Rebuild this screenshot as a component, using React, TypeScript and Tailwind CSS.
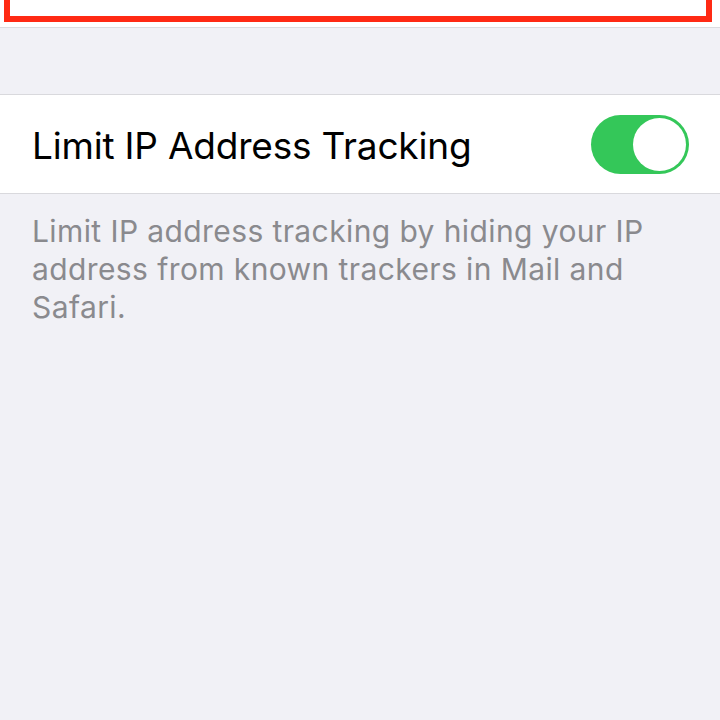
import React from 'react';

const Toggle: React.FC<{ on: boolean }> = ({ on }) => (
    <div className={`w-[98px] h-[59px] rounded-full p-[3px] flex ${on ? 'bg-[#34c759] justify-end' : 'bg-[#e9e9eb] justify-start'}`}>
        <div className="w-[53px] h-[53px] rounded-full bg-white" />
    </div>
);

const App: React.FC = () => {
    return (
        <div className="w-[720px] h-[720px] overflow-hidden bg-[#f1f1f6] font-['Inter',sans-serif]">
            {/* highlighted cell cut off at the top */}
            <div className="h-[28px] bg-white border-b border-[#dcdce0] pl-[4px] pr-[8px]">
                <div className="h-[22px] border-[6px] border-t-0 border-[#ff2a14] bg-white" />
            </div>

            <div className="h-[66px]" />

            <div className="h-[100px] bg-white border-y border-[#d9d9dd] flex items-center justify-between pl-[32px] pr-[31px]">
                <span className="pt-[4px] text-[37px] text-black tracking-[-0.2px]">Limit IP Address Tracking</span>
                <Toggle on />
            </div>

            <p className="pt-[18px] px-[32px] text-[30px] leading-[38px] text-[#8a8a8e] tracking-[0.4px]">
                Limit IP address tracking by hiding your IP address from known trackers in Mail and Safari.
            </p>
        </div>
    );
};

export default App;
